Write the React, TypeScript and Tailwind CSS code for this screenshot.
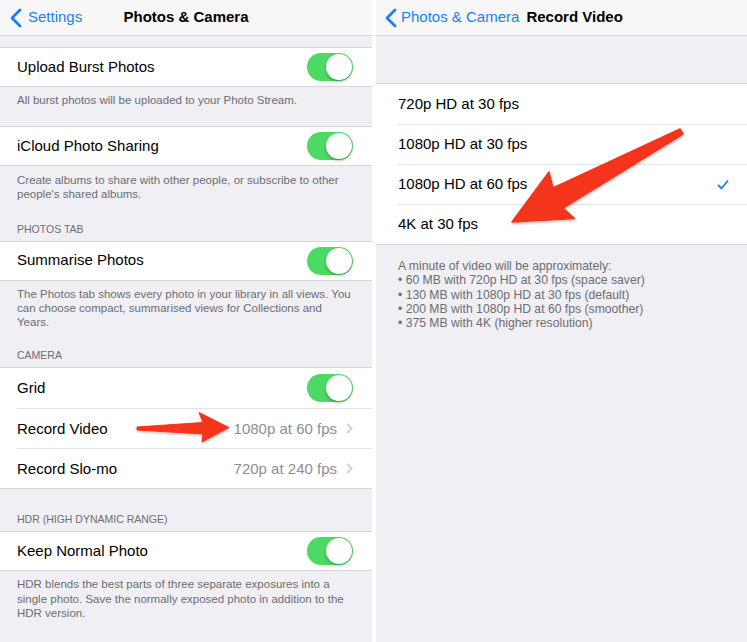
import React from "react";

const font = { fontFamily: '"Liberation Sans", Arial, sans-serif' };

const BackChevron = () => (
	<svg width="14" height="20" viewBox="0 0 14 20" className="shrink-0">
		<path d="M11 2 L3 10 L11 18" fill="none" stroke="#1a7ff7" strokeWidth="2.8" strokeLinecap="round" strokeLinejoin="round" />
	</svg>
);

const Toggle = () => (
	<div className="relative h-[28px] w-[46px] rounded-full bg-[#4cd964]">
		<div className="absolute right-[1px] top-[1px] h-[26px] w-[26px] rounded-full bg-white shadow-[0_2px_3px_rgba(0,0,0,0.25)]" />
	</div>
);

const Chevron = () => (
	<svg width="7" height="11" viewBox="0 0 7 11" className="ml-[9px]">
		<path d="M1 1 L5.5 5.5 L1 10" fill="none" stroke="#c7c7cc" strokeWidth="1.6" />
	</svg>
);

const Group = ({ children }: { children: React.ReactNode }) => (
	<div className="border-y border-[#d6d6da] bg-white">{children}</div>
);

const Row = ({
	label,
	toggle,
	value,
	first,
	tall,
}: {
	label: string;
	toggle?: boolean;
	value?: string;
	first?: boolean;
	tall?: boolean;
}) => (
	<div className="pl-[17px]">
		<div
			className={`flex items-center pr-[19px] ${tall ? "h-[40px]" : "h-[38px]"} ${
				first ? "" : "border-t border-[#e3e3e6]"
			}`}
		>
			<span className="flex-1 text-[15px] text-black">{label}</span>
			{toggle && <Toggle />}
			{value && (
				<div className="flex items-center text-[15px] text-[#8e8e93]">
					{value}
					<Chevron />
				</div>
			)}
		</div>
	</div>
);

const Footer = ({ lines, className }: { lines: string[]; className?: string }) => (
	<div className={`px-[17px] text-[11.5px] leading-[14.3px] text-[#6d6d72] ${className ?? ""}`}>
		{lines.map((l) => (
			<div key={l}>{l}</div>
		))}
	</div>
);

const Header = ({ text, className }: { text: string; className?: string }) => (
	<div className={`px-[17px] pb-[5px] text-[10.5px] leading-[14px] text-[#6d6d72] ${className ?? ""}`}>{text}</div>
);

const LeftPanel = () => (
	<div className="h-full w-[372px] shrink-0 bg-[#efeff4]">
		<div className="relative flex h-[36px] items-center border-b border-[#d6d6da] bg-[#f7f7f7] pl-[9px]">
			<BackChevron />
			<span className="ml-[5px] text-[15px] text-[#1a7ff7]">Settings</span>
			<span className="absolute left-0 right-0 text-center text-[15px] font-bold text-black">Photos &amp; Camera</span>
		</div>
		<div className="h-[11px]" />
		<Group>
			<Row label="Upload Burst Photos" toggle first />
		</Group>
		<Footer className="h-[39px] pt-[6px]" lines={["All burst photos will be uploaded to your Photo Stream."]} />
		<Group>
			<Row label="iCloud Photo Sharing" toggle first />
		</Group>
		<Footer
			className="pt-[7px]"
			lines={["Create albums to share with other people, or subscribe to other", "people's shared albums."]}
		/>
		<Header className="mt-[20px]" text="PHOTOS TAB" />
		<Group>
			<Row label="Summarise Photos" toggle first />
		</Group>
		<Footer
			className="pt-[6px]"
			lines={[
				"The Photos tab shows every photo in your library in all views. You",
				"can choose compact, summarised views for Collections and",
				"Years.",
			]}
		/>
		<Header className="mt-[19px]" text="CAMERA" />
		<Group>
			<Row label="Grid" toggle first tall />
			<Row label="Record Video" value="1080p at 60 fps" tall />
			<Row label="Record Slo-mo" value="720p at 240 fps" tall />
		</Group>
		<Header className="mt-[23px]" text="HDR (HIGH DYNAMIC RANGE)" />
		<Group>
			<Row label="Keep Normal Photo" toggle first />
		</Group>
		<Footer
			className="pt-[6px]"
			lines={[
				"HDR blends the best parts of three separate exposures into a",
				"single photo. Save the normally exposed photo in addition to the",
				"HDR version.",
			]}
		/>
	</div>
);

const options = ["720p HD at 30 fps", "1080p HD at 30 fps", "1080p HD at 60 fps", "4K at 30 fps"];

const RightPanel = () => (
	<div className="h-full flex-1 bg-[#efeff4]">
		<div className="flex h-[36px] items-center border-b border-[#d6d6da] bg-[#f7f7f7] pl-[8px]">
			<BackChevron />
			<span className="ml-[3px] text-[15px] text-[#1a7ff7]">Photos &amp; Camera</span>
			<span className="ml-[7px] text-[15px] font-bold text-black">Record Video</span>
		</div>
		<div className="h-[47px]" />
		<div className="border-y border-[#d6d6da] bg-white">
			{options.map((o, i) => (
				<div key={o} className="pl-[21px]">
					<div
						className={`flex h-[40px] items-center pl-[1px] pr-[18px] ${
							i === 0 ? "" : "border-t border-[#e3e3e6]"
						}`}
					>
						<span className="flex-1 text-[15px] text-black">{o}</span>
						{i === 2 && (
							<svg width="12" height="11" viewBox="0 0 12 11">
								<path d="M1 6 L4.5 9.5 L11 1.5" fill="none" stroke="#1a7ff7" strokeWidth="1.8" />
							</svg>
						)}
					</div>
				</div>
			))}
		</div>
		<div className="px-[22px] pt-[14px] text-[12.2px] leading-[14.3px] text-[#6d6d72]">
			<div>A minute of video will be approximately:</div>
			<div>• 60 MB with 720p HD at 30 fps (space saver)</div>
			<div>• 130 MB with 1080p HD at 30 fps (default)</div>
			<div>• 200 MB with 1080p HD at 60 fps (smoother)</div>
			<div>• 375 MB with 4K (higher resolution)</div>
		</div>
	</div>
);

export default function App() {
	return (
		<div className="relative flex h-[642px] w-[747px] gap-[4px] overflow-hidden bg-white" style={font}>
			<LeftPanel />
			<RightPanel />
			{/* red callout arrows drawn over the screenshots */}
			<svg className="pointer-events-none absolute left-0 top-0" width="747" height="642" viewBox="0 0 747 642">
				<defs>
					<filter id="sh" x="-10%" y="-10%" width="120%" height="130%">
						<feDropShadow dx="0.5" dy="1.5" stdDeviation="1.2" floodColor="#000" floodOpacity="0.25" />
					</filter>
				</defs>
				<polygon
					points="137,427 203,422.5 199,412.5 229,427.5 202,442 203,434 137,430"
					fill="#f4341c"
					stroke="#f4341c"
					strokeWidth="1"
					strokeLinejoin="round"
					filter="url(#sh)"
				/>
				<polygon
					points="680,129 553,188 549,172 512,222 574.5,218.5 563,208 683,134"
					fill="#f4341c"
					stroke="#f4341c"
					strokeWidth="1.5"
					strokeLinejoin="round"
					filter="url(#sh)"
				/>
			</svg>
		</div>
	);
}
